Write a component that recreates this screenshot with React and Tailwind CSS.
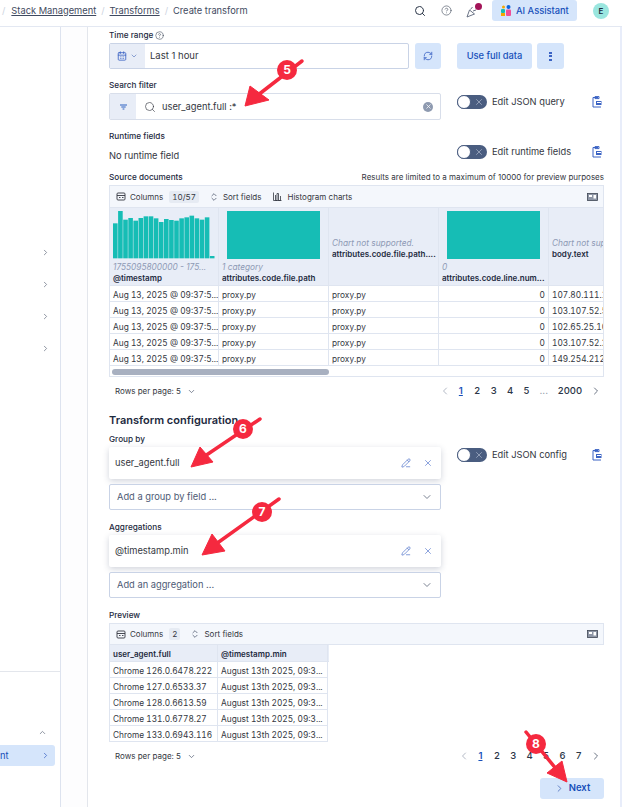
import { CalendarDays, ChevronDown, ChevronLeft, ChevronRight, ChevronUp, ChevronsUpDown, CircleHelp, PencilLine, RefreshCw, Search, X } from "lucide-react";

const sourceRows = [
  ["107.80.111.1"],
  ["103.107.52.5"],
  ["102.65.25.10"],
  ["103.107.52.2"],
  ["149.254.212."],
];
const previewRows = ["Chrome 126.0.6478.222", "Chrome 127.0.6533.37", "Chrome 128.0.6613.59", "Chrome 131.0.6778.27", "Chrome 133.0.6943.116"];
const barTops = [178, 141, 167, 162, 170, 162, 157, 157, 163, 174, 165, 168, 170, 163, 160, 155, 163, 167, 160, 276];

function DocIcon() {
  return (
    <svg width="10" height="12" viewBox="0 0 10 12" fill="none" stroke="#3b63c4" strokeWidth="1">
      <path d="M6 1.5H1v9.5h8" />
      <path d="M3 0.6h4v2H3z" />
      <path d="M4 5h5.5v4H4z" fill="#3b63c4" stroke="none" />
      <path d="M5 6.5h4" stroke="#fff" />
    </svg>
  );
}

function Toggle({ label }) {
  return (
    <div className="flex items-center">
      <div className="w-[30px] h-[14px] rounded-full bg-[#4a5d80] relative flex items-center justify-end pr-[3px] shrink-0">
        <div className="absolute left-0 top-0 w-[14px] h-[14px] rounded-full bg-white border border-[#4a5d80]" />
        <X size={10} color="#d5dcea" strokeWidth={1.2} />
      </div>
      <span className="ml-[5px] w-[100px] text-[9.3px] text-[#343741]">{label}</span>
      <DocIcon />
    </div>
  );
}

function FieldLabel({ children, className = "" }) {
  return <div className={`text-[8.2px] leading-[12px] font-medium text-[#1d2a3e] ${className}`}>{children}</div>;
}

function GridToolbar({ count, histogram, height }) {
  return (
    <div className={`${height} bg-[#f4f7fc] border border-[#dfe5f0] flex items-center pl-[6px] pr-[5px] text-[8px] text-[#343741]`}>
      <svg width="10" height="9" viewBox="0 0 10 9" fill="none" stroke="#343741" strokeWidth="0.9">
        <rect x="1" y="1" width="8" height="7" rx="1" />
        <path d="M1 3.5h8M3 5.5h1.5M6 5.5h1.5" />
      </svg>
      <span className="ml-[4px]">Columns</span>
      <span className="ml-[6px] px-[3px] bg-[#e6ebf3] rounded-[2px] tabular-nums">{count}</span>
      <ChevronsUpDown className="ml-[10px]" size={10} color="#5a6478" />
      <span className="ml-[4px]">Sort fields</span>
      {histogram && (
        <>
          <svg className="ml-[12px]" width="9" height="9" viewBox="0 0 9 9" fill="none" stroke="#343741" strokeWidth="0.8">
            <path d="M0.5 0.5v8h8M2.5 3v5.5h1.5V1.5h1.5v7H7.5V4" />
          </svg>
          <span className="ml-[5px]">Histogram charts</span>
        </>
      )}
      <svg className="ml-auto" width="11" height="8" viewBox="0 0 11 8">
        <rect x="0.5" y="0.5" width="10" height="7" fill="#8e96a6" stroke="#3f4654" strokeWidth="0.8" />
        <rect x="2" y="2" width="3" height="2" fill="#fff" />
        <rect x="6.5" y="2" width="2.5" height="3.5" fill="#fff" />
      </svg>
    </div>
  );
}

function pageClass(p, i) {
  if (i === 0) return "w-[16.4px] text-center text-[#1750ba] underline font-semibold";
  if (p === "...") return "w-[18.4px] text-center text-[#8a93a3]";
  if (p === "2000") return "w-[34px] text-center";
  return "w-[16.4px] text-center";
}

function Pager({ pages }) {
  return (
    <div className="flex items-center text-[9.5px] font-medium text-[#2b3648]">
      <ChevronLeft size={12} color="#b4bac6" className="mr-[2px]" />
      {pages.map((p, i) => (
        <span key={i} className={pageClass(p, i)}>{p}</span>
      ))}
      <ChevronRight size={12} color="#6b7484" className="ml-[3px]" />
    </div>
  );
}

function RowsPerPage() {
  return (
    <div className="flex items-center text-[8px] text-[#343741] pl-[6px]">
      Rows per page: 5
      <ChevronDown size={9} className="ml-[6px]" color="#5a6478" />
    </div>
  );
}

function HeaderCell({ chart, sub, name, className = "" }) {
  return (
    <div className={`border-r border-[#dfe5f0] px-[3px] flex flex-col justify-end overflow-hidden ${className}`}>
      {chart}
      <div className="text-[8.3px] italic text-[#8e9ab5] whitespace-nowrap mt-[2px] leading-[12px]">{sub}</div>
      <div className="text-[8px] font-semibold text-[#1d2a3e] whitespace-nowrap leading-[11px] mb-[1px]">{name}</div>
    </div>
  );
}

function BodyCell({ children, className = "" }) {
  return <div className={`h-[16px] border-r border-b border-[#dfe5f0] px-[3px] text-[8.3px] leading-[18px] tabular-nums text-[#343741] whitespace-nowrap overflow-hidden ${className}`}>{children}</div>;
}

function SourceGrid() {
  return (
    <div className="border-x border-[#dfe5f0]">
      <div className="grid grid-cols-[109px_110px_110px_110px_1fr] bg-[#e8edf7] h-[78px] border-b border-[#dfe5f0]">
        <HeaderCell
          sub="1755095800000 - 175..."
          name="@timestamp"
          chart={
            <svg width="102" height="48" viewBox="0 0 102 48">
              {barTops.map((t, i) => (
                <rect key={i} x={i * 5.1} y={(t - 141) / 3} width="4.6" height={(283 - t) / 3} fill="#16bdb5" />
              ))}
            </svg>
          }
        />
        <HeaderCell sub="1 category" name="attributes.code.file.path" chart={<div className="w-[93px] h-[48px] ml-[5px] bg-[#16bdb5]" />} />
        <div className="border-r border-[#dfe5f0] px-[3px] flex flex-col justify-center overflow-hidden pt-[3px]">
          <div className="text-[8.3px] italic text-[#8e9ab5] leading-[12px] whitespace-nowrap">Chart not supported.</div>
          <div className="text-[8px] font-semibold text-[#1d2a3e] leading-[11px] whitespace-nowrap">attributes.code.file.path....</div>
        </div>
        <HeaderCell sub="0" name="attributes.code.line.num..." chart={<div className="w-[93px] h-[48px] ml-[5px] bg-[#16bdb5]" />} />
        <div className="px-[3px] flex flex-col justify-center overflow-hidden pt-[3px]">
          <div className="text-[8.3px] italic text-[#8e9ab5] leading-[12px] whitespace-nowrap">Chart not sup</div>
          <div className="text-[8px] font-semibold text-[#1d2a3e] leading-[11px]">body.text</div>
        </div>
      </div>
      {sourceRows.map((r, i) => (
        <div key={i} className="grid grid-cols-[109px_110px_110px_110px_1fr]">
          <BodyCell>Aug 13, 2025 @ 09:37:5...</BodyCell>
          <BodyCell>proxy.py</BodyCell>
          <BodyCell>proxy.py</BodyCell>
          <BodyCell className="text-right">0</BodyCell>
          <BodyCell className="border-r-0">{r[0]}</BodyCell>
        </div>
      ))}
      <div className="h-[11px] border-b border-[#dfe5f0] pt-[3px] pl-[2px]">
        <div className="w-[217px] h-[6px] rounded-full bg-[#a8b0c0]" />
      </div>
    </div>
  );
}

function PreviewGrid() {
  return (
    <div className="w-[220px] border-l border-[#dfe5f0]">
      <div className="grid grid-cols-[108px_110px] bg-[#e8edf7] h-[17px] border-b border-[#dfe5f0] text-[8px] font-semibold text-[#1d2a3e] leading-[18px]">
        <div className="px-[3px] border-r border-[#dfe5f0]">user_agent.full</div>
        <div className="px-[3px] border-r border-[#dfe5f0]">@timestamp.min</div>
      </div>
      {previewRows.map((r, i) => (
        <div key={i} className="grid grid-cols-[108px_110px]">
          <BodyCell>{r}</BodyCell>
          <BodyCell>August 13th 2025, 09:3...</BodyCell>
        </div>
      ))}
    </div>
  );
}

function PickedField({ name }) {
  return (
    <div className="h-[32px] w-[332px] bg-white rounded-[2px] shadow-[0_2px_6px_rgba(40,55,90,0.22)] flex items-center pl-[6px] pr-[8px] text-[9.3px] text-[#343741]">
      {name}
      <PencilLine size={10} color="#3b63c4" className="ml-auto" strokeWidth={1.5} />
      <X size={10} color="#3b63c4" className="ml-[12px]" strokeWidth={1.4} />
    </div>
  );
}

function AddSelect({ placeholder }) {
  return (
    <div className="mt-[5px] h-[26px] w-[332px] bg-white border border-[#c9d3e6] rounded-[2px] flex items-center pl-[7px] pr-[7px] text-[9.3px] text-[#4e5b75]">
      {placeholder}
      <ChevronDown size={12} color="#7a8292" className="ml-auto" />
    </div>
  );
}

function Arrow({ tail, neck, tip, wingA, wingB }) {
  return (
    <>
      <line x1={tail[0]} y1={tail[1]} x2={neck[0]} y2={neck[1]} stroke="#f5293f" strokeWidth="3.5" strokeLinecap="round" />
      <polygon points={`${tip} ${wingA} ${wingB}`} fill="#f5293f" stroke="#f5293f" strokeLinejoin="round" />
    </>
  );
}

function Badge({ n, className }) {
  return (
    <div className={`absolute w-[20px] h-[20px] rounded-full bg-[#f5293f] text-white text-[12px] font-bold flex items-center justify-center ${className}`}>{n}</div>
  );
}

export default function App() {
  return (
    <div className="relative w-[622px] h-[807px] overflow-hidden bg-white flex flex-col" style={{ fontFamily: "Inter, sans-serif" }}>
      {/* Header */}
      <header className="h-[27px] shrink-0 bg-white border-b border-[#e3e8f2] flex items-center pl-[2px] pr-[13px] pb-[5px] text-[9.3px] text-[#3f4a60]">
        <span className="text-[#ccd3e0] mr-[6px]">/</span>
        <span className="underline">Stack Management</span>
        <span className="text-[#ccd3e0] mx-[5px]">/</span>
        <span className="underline">Transforms</span>
        <span className="text-[#ccd3e0] mx-[5px]">/</span>
        <span>Create transform</span>
        <Search size={12} color="#2b3648" className="ml-auto" />
        <CircleHelp size={11} color="#4a5363" className="ml-[15px]" strokeWidth={1.4} />
        <div className="relative ml-[14px] w-[14px] h-[14px]">
          <svg width="12" height="12" viewBox="0 0 12 12" fill="none" stroke="#5a6478" strokeWidth="0.9" className="absolute left-0 top-[2px]">
            <path d="M1 11l2.5-7 5 4-7.5 3zM4.5 3.5l2-2.5M7 5l3-1" />
          </svg>
          <div className="absolute right-[-2px] top-[-1px] w-[7px] h-[7px] rounded-full bg-[#a31458]" />
        </div>
        <div className="ml-[12px] h-[21px] w-[85px] rounded-[3px] bg-[#d5e5fb] flex items-center pl-[9px] font-medium text-[#1750ba]">
          <svg width="10" height="11" viewBox="0 0 10 11" className="mr-[5px] shrink-0">
            <rect x="0" y="4" width="4" height="4" rx="1" fill="#16bdb5" />
            <rect x="0" y="8" width="4" height="3" fill="#f5a700" />
            <circle cx="7.5" cy="2" r="2" fill="#0b64dd" />
            <rect x="5" y="4.5" width="5" height="6.5" rx="1" fill="#f04e98" />
            <circle cx="2.5" cy="2" r="1.5" fill="#f5a700" />
          </svg>
          AI Assistant
        </div>
        <div className="ml-[16px] w-[16px] h-[16px] rounded-full bg-[#9ae6df] text-[8px] font-semibold text-[#1d2a3e] flex items-center justify-center">E</div>
      </header>

      <div className="flex flex-1 min-h-0">
        {/* Side nav */}
        <aside className="w-[61px] shrink-0 border-r border-[#dde3ef] flex flex-col bg-white">
          <div className="h-[645px] shrink-0 flex flex-col items-end pr-[10px] pt-[221px] gap-[23px] border-b border-[#e3e6ec]">
            <ChevronRight size={9} color="#6b7484" strokeWidth={2} />
            <ChevronRight size={9} color="#6b7484" strokeWidth={2} />
            <ChevronRight size={9} color="#6b7484" strokeWidth={2} />
            <ChevronRight size={9} color="#6b7484" strokeWidth={2} />
          </div>
          <div className="flex flex-col items-end pr-[13px] mt-[56px]">
            <ChevronUp size={9} color="#6b7484" strokeWidth={2} />
          </div>
          <div className="mt-[8px] mr-[5px] h-[21px] rounded-r-[3px] bg-[#d5e5fb] flex items-center justify-between pr-[5px] text-[9.3px] text-[#1750ba]">
            nt
            <ChevronRight size={9} color="#3b63c4" strokeWidth={2} />
          </div>
        </aside>
        {/* Gutter */}
        <div className="w-[27px] shrink-0 border-r border-[#e3e6ec] bg-[#fdfdfe]" />

        {/* Form */}
        <main className="flex-1 min-w-0 bg-white pl-[21px] pr-[16px] border-r-[2px] border-[#e8edfa]">
          <div className="flex items-center h-[12px] mt-[2px] text-[8.2px] font-medium text-[#1d2a3e]">
            Time range
            <CircleHelp size={9} className="ml-[2px]" strokeWidth={1.3} />
          </div>
          <div className="flex mt-[2px] h-[26px]">
            <div className="w-[300px] flex border border-[#c9d3e6] rounded-[2px] overflow-hidden">
              <div className="w-[35px] bg-[#e8edf7] flex items-center justify-center gap-[3px]">
                <CalendarDays size={10} color="#3b63c4" />
                <ChevronDown size={8} color="#5a78c0" />
              </div>
              <span className="pl-[5px] text-[9.5px] leading-[24px] text-[#343741]">Last 1 hour</span>
            </div>
            <div className="ml-[6px] w-[26px] bg-[#d5e5fb] rounded-[3px] flex items-center justify-center">
              <RefreshCw size={10} color="#3b63c4" />
            </div>
            <div className="ml-[16px] w-[75px] bg-[#d5e5fb] rounded-[3px] flex items-center justify-center text-[9.3px] font-medium text-[#1750ba]">Use full data</div>
            <div className="ml-[5px] w-[27px] bg-[#d5e5fb] rounded-[3px] flex flex-col items-center justify-center gap-[1.5px]">
              <span className="w-[3px] h-[2px] bg-[#3b63c4]" />
              <span className="w-[3px] h-[2px] bg-[#3b63c4]" />
              <span className="w-[3px] h-[2px] bg-[#3b63c4]" />
            </div>
          </div>

          <FieldLabel className="mt-[10px]">Search filter</FieldLabel>
          <div className="flex mt-[2px] h-[27px]">
            <div className="w-[332px] flex border border-[#d8deea] rounded-[2px] overflow-hidden">
              <div className="w-[26px] bg-[#e8edf7] flex items-center justify-center">
                <svg width="7" height="6" viewBox="0 0 7 6" stroke="#1750ba" strokeWidth="0.9">
                  <path d="M0 1h7M1.3 3h4.4M2.6 5h1.8" />
                </svg>
              </div>
              <div className="flex-1 flex items-center pl-[8px] pr-[7px] text-[9.3px] text-[#343741]">
                <Search size={12} color="#343741" strokeWidth={1.3} />
                <span className="ml-[6px]">user_agent.full :*</span>
                <div className="ml-auto w-[10px] h-[10px] rounded-full bg-[#8e9ab0] flex items-center justify-center">
                  <X size={7} color="#fff" strokeWidth={2.5} />
                </div>
              </div>
            </div>
            <div className="ml-[16px] mt-[2px] self-start">
              <Toggle label="Edit JSON query" />
            </div>
          </div>

          <div className="flex mt-[10px] h-[33px]">
            <div className="w-[332px]">
              <FieldLabel>Runtime fields</FieldLabel>
              <div className="text-[9.3px] text-[#343741] mt-[7px] leading-[14px]">No runtime field</div>
            </div>
            <div className="ml-[16px] mt-[15px]">
              <Toggle label="Edit runtime fields" />
            </div>
          </div>

          <div className="flex justify-between items-center mt-[7px] h-[14px]">
            <FieldLabel>Source documents</FieldLabel>
            <span className="text-[8px] text-[#343741] whitespace-nowrap">Results are limited to a maximum of 10000 for preview purposes</span>
          </div>
          <div className="mt-[1px]">
            <GridToolbar count="10/57" histogram height="h-[23px]" />
            <SourceGrid />
          </div>
          <div className="flex items-center justify-between h-[26px] mt-[1px] pr-[2px]">
            <RowsPerPage />
            <Pager pages={["1", "2", "3", "4", "5", "...", "2000"]} />
          </div>

          <div className="text-[11px] leading-[14px] font-semibold text-[#1d2a3e] mt-[9px]">Transform configuration</div>
          <div className="flex mt-[6px]">
            <div className="w-[332px]">
              <FieldLabel>Group by</FieldLabel>
              <div className="mt-[2px]"><PickedField name="user_agent.full" /></div>
              <AddSelect placeholder="Add a group by field ..." />
            </div>
            <div className="ml-[16px] mt-[15px]">
              <Toggle label="Edit JSON config" />
            </div>
          </div>
          <FieldLabel className="mt-[11px]">Aggregations</FieldLabel>
          <div className="mt-[2px]"><PickedField name="@timestamp.min" /></div>
          <AddSelect placeholder="Add an aggregation ..." />

          <FieldLabel className="mt-[11px]">Preview</FieldLabel>
          <div className="mt-[2px]">
            <GridToolbar count="2" height="h-[22px]" />
            <PreviewGrid />
          </div>
          <div className="flex items-center justify-between h-[26px] mt-[1px] pr-[2px]">
            <RowsPerPage />
            <Pager pages={["1", "2", "3", "4", "5", "6", "7"]} />
          </div>
          <div className="flex justify-end mt-[9px]">
            <div className="w-[64px] h-[21px] bg-[#d5e5fb] rounded-[3px] flex items-center justify-center text-[9.5px] font-semibold text-[#1750ba]">
              <ChevronRight size={11} color="#5a78c0" className="mr-[4px]" />
              Next
            </div>
          </div>
        </main>
      </div>

      {/* Callout arrows over the page */}
      <svg className="absolute inset-0 pointer-events-none" width="622" height="807">
        <Arrow tail={[302, 61]} neck={[258, 95]} tip={[245, 106]} wingA={[250, 86]} wingB={[269, 100]} />
        <Arrow tail={[260, 419]} neck={[205, 456]} tip={[191, 467]} wingA={[200, 447]} wingB={[213, 462]} />
        <Arrow tail={[279, 499]} neck={[216, 544]} tip={[202, 555]} wingA={[212, 534]} wingB={[225, 551]} />
        <Arrow tail={[526, 732]} neck={[557, 770]} tip={[567, 782]} wingA={[562, 761]} wingB={[547, 773]} />
      </svg>
      <Badge n="5" className="left-[277px] top-[60px]" />
      <Badge n="6" className="left-[233px] top-[419px]" />
      <Badge n="7" className="left-[252px] top-[502px]" />
      <Badge n="8" className="left-[526px] top-[734px]" />
    </div>
  );
}
